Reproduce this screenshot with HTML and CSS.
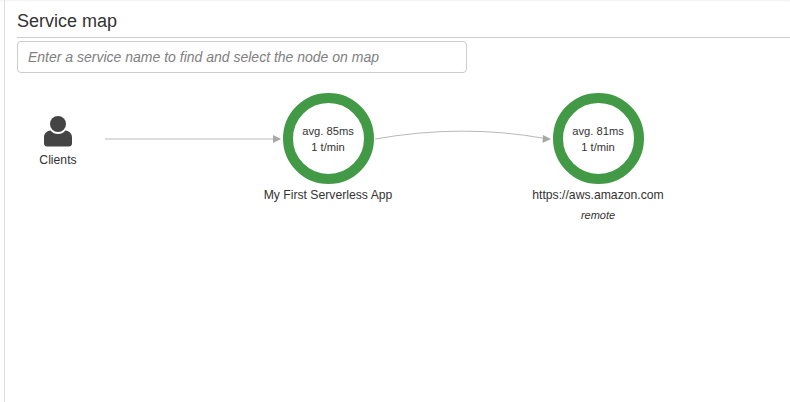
FILE: index.html
```html
<!DOCTYPE html>
<html lang="en">
<head>
<meta charset="utf-8">
<title>Service map</title>
<link rel="stylesheet" href="styles.css">
</head>
<body>
<main class="panel">
  <h1 class="title">Service map</h1>
  <input class="search" type="text" placeholder="Enter a service name to find and select the node on map">
  <div class="map">
    <svg class="edges" width="785" height="329" viewBox="0 0 785 329">
      <path class="edge edge-straight" d="M100 66H270"/>
      <polygon class="arrow" points="268,62 276,66 268,70"/>
      <path class="edge edge-curve" d="M370 66Q458 50.500 540 65.500"/>
      <polygon class="arrow" points="538,62 546,66 537.500,70"/>
    </svg>
    <div class="node client">
      <svg class="person" width="30" height="31" viewBox="0 0 30 31">
        <circle cx="15" cy="8" r="8"/>
        <path d="M7.500 14.500C9.500 17 12 18 15 18s5.500-1 7.500-3.500C26.500 15 29 17.500 29 21.500v6c0 2-1.500 3-3 3H4c-1.500 0-3-1-3-3v-6c0-4 2.500-6.500 6.500-7z"/>
      </svg>
      <span class="label">Clients</span>
    </div>
    <div class="node service first">
      <div class="ring"><span>avg. 85ms</span><span>1 t/min</span></div>
      <span class="label">My First Serverless App</span>
    </div>
    <div class="node service second">
      <div class="ring"><span>avg. 81ms</span><span>1 t/min</span></div>
      <span class="label">https://aws.amazon.com</span>
      <em class="note">remote</em>
    </div>
  </div>
</main>
</body>
</html>
```
FILE: styles.css
```css
html, body {
  margin: 0;
  height: 100%;
  background: #fff;
}
body {
  overflow: hidden;
  font-family: "Liberation Sans", Arial, sans-serif;
  color: #333;
  box-shadow: inset 0 2px 2px -1px #f2f2f2;
}
.panel {
  box-sizing: border-box;
  height: 402px;
  margin-left: 4px;
  border-left: 1px solid #ddd;
  padding: 11px 0 0 12px;
  display: flex;
  flex-direction: column;
}
.title {
  margin: 0;
  height: 26px;
  line-height: 21px;
  font-size: 18px;
  font-weight: 400;
  color: #333;
  border-bottom: 1px solid #ccc;
}
.search {
  box-sizing: border-box;
  width: 450px;
  height: 32px;
  margin-top: 3px;
  padding: 0 10px;
  border: 1px solid #ccc;
  border-radius: 4px;
  outline: none;
  font: italic 14px "Liberation Sans", Arial, sans-serif;
  color: #333;
}
.search::placeholder {
  color: #808080;
  opacity: 1;
}
.map {
  position: relative;
  flex: 1;
  margin-left: -12px;
}
.edges {
  position: absolute;
  left: 0;
  top: 0;
}
.edge {
  fill: none;
}
.edge-straight {
  stroke-width: 1.500;
  stroke: #d0d0d0;
}
.edge-curve {
  stroke-width: 1;
  stroke: #b8b8b8;
}
.arrow {
  fill: #a8a8a8;
}
.node {
  position: absolute;
  display: flex;
  flex-direction: column;
  align-items: center;
  font-size: 12.200px;
  white-space: nowrap;
}
.client {
  left: 13px;
  top: 43px;
  width: 80px;
}
.person {
  display: block;
  fill: #444;
}
.client .label {
  margin-top: 5px;
  line-height: 16px;
}
.service {
  top: 20px;
  width: 200px;
}
.first {
  left: 223px;
}
.second {
  left: 493px;
}
.ring {
  box-sizing: border-box;
  width: 91px;
  height: 91px;
  border: 10px solid #439a46;
  border-radius: 50%;
  display: flex;
  flex-direction: column;
  align-items: center;
  justify-content: center;
  font-size: 11.200px;
  line-height: 16px;
}
.service .label {
  margin-top: 3px;
  line-height: 16px;
}
.note {
  margin-top: 5px;
  font-size: 11px;
  line-height: 14px;
}
```
